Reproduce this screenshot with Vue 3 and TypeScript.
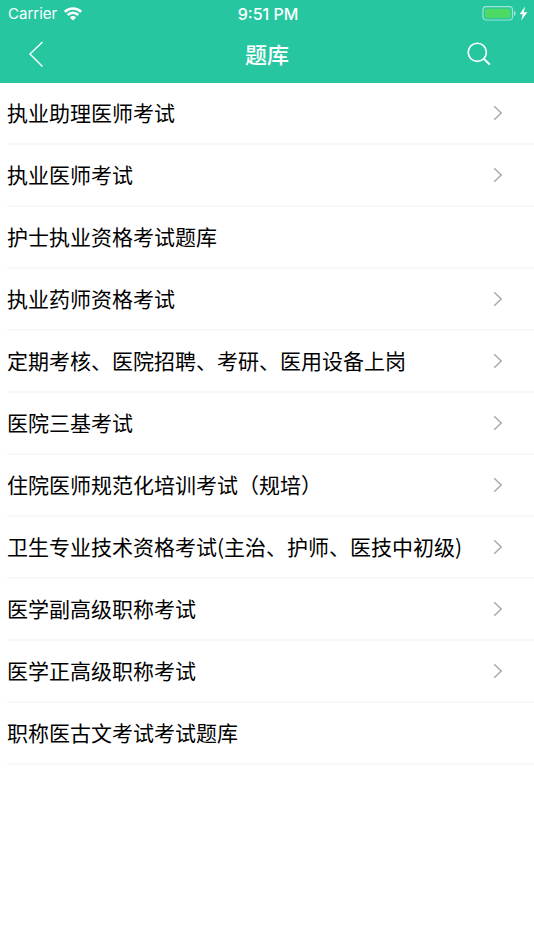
<script setup lang="ts">
interface Category {
  title: string
  expandable: boolean
}

const categories: Category[] = [
  { title: '执业助理医师考试', expandable: true },
  { title: '执业医师考试', expandable: true },
  { title: '护士执业资格考试题库', expandable: false },
  { title: '执业药师资格考试', expandable: true },
  { title: '定期考核、医院招聘、考研、医用设备上岗', expandable: true },
  { title: '医院三基考试', expandable: true },
  { title: '住院医师规范化培训考试（规培）', expandable: true },
  { title: '卫生专业技术资格考试(主治、护师、医技中初级)', expandable: true },
  { title: '医学副高级职称考试', expandable: true },
  { title: '医学正高级职称考试', expandable: true },
  { title: '职称医古文考试考试题库', expandable: false },
]
</script>

<template>
  <div class="screen">
    <header class="header">
      <div class="status">
        <div class="carrier">
          <span>Carrier</span>
          <svg width="18" height="14" viewBox="0 0 18 14" aria-hidden="true">
            <g fill="none" stroke="#fff" stroke-width="2.5">
              <path d="M0.8 4.8A11.6 11.6 0 0 1 17.2 4.8" />
              <path d="M3.7 8A7.5 7.5 0 0 1 14.3 8" />
            </g>
            <path d="M9 13.4L5.9 10.4A4.4 4.4 0 0 1 12.1 10.4Z" fill="#fff" />
          </svg>
        </div>
        <time class="time">9:51 PM</time>
        <div class="power">
          <svg width="46" height="16" viewBox="0 0 46 16" aria-hidden="true">
            <rect x="1" y="0.7" width="29.5" height="13.3" rx="3.2" fill="none" stroke="#fff" stroke-opacity="0.55" stroke-width="1.2" />
            <rect x="3" y="2.7" width="25.5" height="9.3" rx="1.4" fill="#4cd964" />
            <path d="M32 4.8Q33.8 5.6 33.8 7.4T32 10Z" fill="#fff" fill-opacity="0.55" />
            <path d="M43 0.6L37.6 8.2H40.7L39.2 14.6L45.4 6.2H41.9Z" fill="#fff" />
          </svg>
        </div>
      </div>
      <nav class="nav">
        <button class="icon-button" type="button" aria-label="返回">
          <svg width="16" height="28" viewBox="0 0 16 28" aria-hidden="true">
            <path d="M14.5 2L2 14L14.5 26.5" fill="none" stroke="#fff" stroke-width="1.4" />
          </svg>
        </button>
        <h1 class="title">题库</h1>
        <button class="icon-button search" type="button" aria-label="搜索">
          <svg width="24" height="24" viewBox="0 0 24 24" aria-hidden="true">
            <g fill="none" stroke="#fff" stroke-width="1.6">
              <circle cx="10.3" cy="10.3" r="9.1" />
              <path d="M16.8 16.8L22.8 22.6" stroke-width="2" />
            </g>
          </svg>
        </button>
      </nav>
    </header>
    <main>
      <ul class="list">
        <li v-for="item in categories" :key="item.title">
          <a class="row" href="#">
            <span class="label">{{ item.title }}</span>
            <svg v-if="item.expandable" class="chevron" width="10" height="16" viewBox="0 0 10 16" aria-hidden="true">
              <path d="M1.2 1.2L8.2 8L1.2 14.8" fill="none" stroke="#a6a6a6" stroke-width="1.4" />
            </svg>
          </a>
        </li>
      </ul>
    </main>
  </div>
</template>

<style>
body {
  margin: 0;
  background: #fff;
}
</style>

<style scoped>
.screen {
  min-height: 100vh;
  background: #fff;
  color: #000;
  font-family: "Noto Sans CJK SC", sans-serif;
}

.header {
  background: #26c6a1;
  color: #fff;
}

.status {
  display: grid;
  grid-template-columns: 1fr auto 1fr;
  align-items: center;
  height: 28px;
  padding: 0 6px 0 8px;
  font-family: Inter, sans-serif;
  font-size: 15px;
  line-height: 28px;
}

.carrier {
  display: flex;
  align-items: center;
  gap: 7px;
}

.time {
  font-size: 16px;
  font-weight: 500;
}

.power {
  display: flex;
  justify-content: flex-end;
}

.nav {
  display: grid;
  grid-template-columns: 1fr auto 1fr;
  align-items: center;
  box-sizing: border-box;
  height: 55px;
  padding: 0 28px 4px;
}

.icon-button {
  display: flex;
  justify-self: start;
  padding: 0;
  border: 0;
  background: none;
  cursor: pointer;
}

.search {
  justify-self: end;
  margin-right: 15px;
}

.title {
  margin: 0;
  padding-bottom: 2px;
  font-size: 22px;
  font-weight: 500;
  line-height: 32px;
}

.list {
  margin: 0;
  padding: 0 0 0 7px;
  list-style: none;
}

.row {
  display: flex;
  align-items: center;
  justify-content: space-between;
  box-sizing: border-box;
  min-height: 62px;
  padding-right: 31px;
  border-bottom: 2px solid #f7f7f7;
  color: inherit;
  text-decoration: none;
}

.label {
  padding-bottom: 2px;
  font-size: 21px;
  line-height: 30px;
}

.chevron {
  flex: none;
}
</style>
